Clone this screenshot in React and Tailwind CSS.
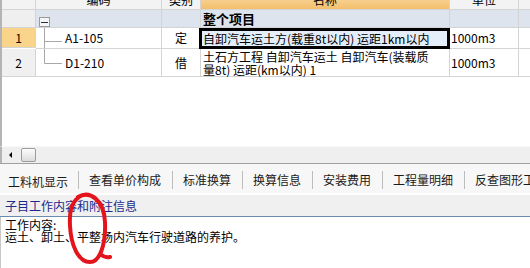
import React from 'react';

const line = 'border-r border-b border-[#d4d4d4]';

const TreeCell = ({ kind, code }) => (
  <div className={`relative flex items-center bg-white ${line}`}>
    <svg className="absolute left-0 top-0" width="30" height="28" viewBox="0 0 30 28">
      {kind === 'mid' ? (
        <>
          <line x1="8.5" y1="0" x2="8.5" y2="20" stroke="#a8a8a8" />
          <line x1="8.5" y1="13.5" x2="26" y2="13.5" stroke="#a8a8a8" />
        </>
      ) : (
        <>
          <line x1="8.5" y1="0" x2="8.5" y2="14.5" stroke="#a8a8a8" />
          <line x1="8.5" y1="14.5" x2="26" y2="14.5" stroke="#a8a8a8" />
        </>
      )}
    </svg>
    <span className="pl-[29px] text-[12px] leading-[12px] text-black">{code}</span>
  </div>
);

export default function App() {
  const tabs = ['工料机显示', '查看单价构成', '标准换算', '换算信息', '安装费用', '工程量明细', '反查图形工程量'];

  return (
    <div className="relative w-[530px] h-[268px] overflow-hidden bg-white font-['Noto_Sans_CJK_SC',sans-serif] text-black">
      {/* Grid */}
      <div className="h-[146px] overflow-hidden border-l-2 border-[#b4b4b4]">
        <div className="-mt-[10px] grid grid-cols-[34px_126px_39px_249px_69px_1fr]">
          {/* header */}
          <div className={`h-[20px] bg-[#f3f3f3] ${line}`}></div>
          <div className={`h-[20px] flex items-end justify-center pb-[3px] bg-[#f3f3f3] text-[12px] leading-[12px] ${line}`}>编码</div>
          <div className={`h-[20px] flex items-end justify-center pb-[3px] bg-[#f3f3f3] text-[12px] leading-[12px] ${line}`}>类别</div>
          <div className={`h-[20px] flex items-end justify-center pb-[3px] bg-gradient-to-b from-[#fbe2ad] to-[#f3bf6e] text-[12px] leading-[12px] ${line}`}>名称</div>
          <div className={`h-[20px] flex items-end justify-center pb-[3px] bg-[#f3f3f3] text-[12px] leading-[12px] ${line}`}>单位</div>
          <div className="h-[20px] bg-[#f3f3f3] border-b border-[#d4d4d4]"></div>

          {/* 整个项目 */}
          <div className={`h-[18px] bg-[#efefef] ${line}`}></div>
          <div className={`h-[18px] relative bg-[#dde4ed] ${line}`}>
            <div className="absolute left-[3px] top-[7px] w-[11px] h-[10px] border border-[#9a9a9a] bg-[#f4f6f8] flex items-center justify-center">
              <div className="w-[7px] h-[1px] bg-[#303030]"></div>
            </div>
          </div>
          <div className={`h-[18px] bg-[#dde4ed] ${line}`}></div>
          <div className={`h-[18px] bg-[#dde4ed] flex items-end pb-[1px] pl-[2px] text-[13px] leading-[14px] font-bold ${line}`}>整个项目</div>
          <div className={`h-[18px] bg-[#dde4ed] ${line}`}></div>
          <div className="h-[18px] bg-[#dde4ed] border-b border-[#d4d4d4]"></div>

          {/* row 1 */}
          <div className={`h-[20px] bg-[#fbd48c] flex items-center justify-center text-[12px] leading-[12px] ${line}`}>1</div>
          <TreeCell kind="mid" code="A1-105" />
          <div className={`flex items-center justify-center bg-white text-[12px] leading-[12px] ${line}`}>定</div>
          <div className="-ml-[2px] h-[21px] bg-[#e4eefa] border-[3px] border-black flex items-center pl-[1px] text-[12px] leading-[12px] whitespace-nowrap z-10">
            自卸汽车运土方(载重8t以内) 运距1km以内
          </div>
          <div className={`flex items-center pl-[1px] bg-white text-[12px] leading-[12px] ${line}`}>1000m3</div>
          <div className="bg-white border-b border-[#d4d4d4]"></div>

          {/* row 2 */}
          <div className={`h-[28px] bg-[#f0f0f0] flex items-center justify-center text-[12px] leading-[12px] ${line}`}>2</div>
          <TreeCell kind="last" code="D1-210" />
          <div className={`flex items-center justify-center bg-white text-[12px] leading-[12px] ${line}`}>借</div>
          <div className={`flex flex-col justify-center pl-[2px] bg-white text-[12px] leading-[13px] whitespace-nowrap ${line}`}>
            <span>土石方工程 自卸汽车运土 自卸汽车(装载质</span>
            <span>量8t) 运距(km以内) 1</span>
          </div>
          <div className={`flex items-center pl-[1px] bg-white text-[12px] leading-[12px] ${line}`}>1000m3</div>
          <div className="bg-white border-b border-[#d4d4d4]"></div>
        </div>
      </div>

      {/* horizontal scrollbar */}
      <div className="h-[17px] bg-[#efefef] border-t border-[#f8f8f8] flex items-center border-l-2 border-l-[#b4b4b4]">
        <div className="ml-[7px] w-0 h-0 border-y-[3px] border-y-transparent border-r-[3px] border-r-black"></div>
        <div className="ml-[9px] w-[15px] h-[14px] rounded-[2px] border border-[#9c9c9c] bg-gradient-to-b from-[#fdfdfd] to-[#dcdcdc]"></div>
      </div>
      <div className="h-[1px] bg-[#a0a0a0]"></div>

      {/* tabs */}
      <div className="h-[29px] bg-[#f7f7f7] flex items-end pb-[4px] text-[12px] leading-[14px] text-[#1a1a1a] whitespace-nowrap">
        {tabs.map((t, i) => (
          <div key={t} className="flex items-center">
            {i > 0 && <div className="w-[1px] h-[18px] bg-[#bdbdbd]"></div>}
            <span className={i === 0 ? 'pl-[8px] pr-[10px]' : 'pl-[10px] pr-[11px]'}>{t}</span>
          </div>
        ))}
      </div>
      <div className="h-[2px] bg-white"></div>

      {/* sub header */}
      <div className="h-[22px] bg-[#f0f0f0] border-b border-[#6a8cb0] flex items-center pl-[5px] text-[12px] leading-[14px] text-[#1c2a8a]">
        子目工作内容和附注信息
      </div>

      {/* content */}
      <div className="h-[60px] border-l border-[#c8c8c8] pl-[4px] pt-[2px] text-[12px] leading-[12px]">
        <div>工作内容:</div>
        <div>运土、卸土、平整场内汽车行驶道路的养护。</div>
      </div>

      {/* red annotation */}
      <svg className="absolute left-0 top-0 pointer-events-none" width="530" height="268" viewBox="0 0 530 268">
        <path
          d="M78 197 C90 190 104 200 105 222 C106 244 100 262 90 262 C78 262 71 245 70 226 C69 208 73 199 83 195 M100 254 C104 257 107 258 110 257"
          fill="none"
          stroke="#e4141c"
          strokeWidth="4"
          strokeLinecap="round"
        />
      </svg>
    </div>
  );
}
